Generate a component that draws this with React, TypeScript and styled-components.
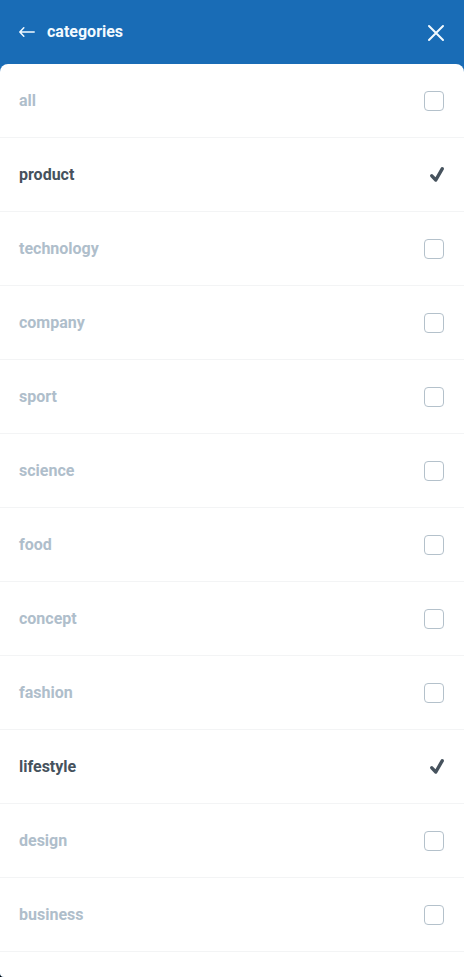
import { ReactElement, useState } from "react";
import styled, { createGlobalStyle } from 'styled-components';

const GlobalStyle = createGlobalStyle`
  * {
    box-sizing: border-box;
  }

  body {
    margin: 0;
    background: #000000;
    font-family: Roboto, "Liberation Sans", sans-serif;
    font-size: 16px;
    font-weight: 700;
  }
`;

const StyledScreen = styled.div`
  display: flex;
  flex-direction: column;
  min-height: 100vh;
  background: #196cb6;
  border-bottom-left-radius: 4px;
  overflow: hidden;
`;

const StyledHeader = styled.header`
  display: flex;
  align-items: center;
  gap: 12px;
  height: 64px;
  padding: 0 19px;
  color: #f2faff;
`;

const StyledTitle = styled.h1`
  flex: 1;
  margin: 0;
  font-size: 16px;
  line-height: 20px;
`;

const StyledIconButton = styled.button`
  display: flex;
  padding: 0;
  border: 0;
  background: none;
  color: inherit;
  cursor: pointer;
`;

const StyledPanel = styled.main`
  flex: 1;
  background: #ffffff;
  border-radius: 8px 8px 0 0;
`;

const StyledList = styled.ul`
  margin: 0;
  padding: 0;
  list-style: none;
`;

const StyledItem = styled.li`
  border-bottom: 1px solid #f3f4f5;
`;

const StyledLabel = styled.label<{ $checked: boolean }>`
  display: flex;
  align-items: center;
  justify-content: space-between;
  height: 73px;
  padding: 0 20px 0 19px;
  line-height: 20px;
  color: ${({ $checked }) => ($checked ? "#46525d" : "#afbecb")};
  cursor: pointer;
`;

const StyledCheck = styled.span`
  position: relative;
  display: flex;

  svg {
    position: absolute;
    right: 0;
    top: 2px;
    pointer-events: none;
  }
`;

const StyledCheckbox = styled.input`
  appearance: none;
  width: 20px;
  height: 20px;
  margin: 0;
  border: 1px solid #b4c1cb;
  border-radius: 4px;
  background: #ffffff;
  cursor: pointer;

  &:checked {
    border-color: transparent;
  }
`;

const categories = [
  "all",
  "product",
  "technology",
  "company",
  "sport",
  "science",
  "food",
  "concept",
  "fashion",
  "lifestyle",
  "design",
  "business",
];

function BackIcon() : ReactElement {
    return (
        <svg width="16" height="12" viewBox="0 0 16 12" fill="none" stroke="currentColor" strokeWidth="1.5" strokeLinecap="round" strokeLinejoin="round">
            <path d="M4.8 1.8 L0.8 6 L4.8 10.2 M0.8 6 H15.2"/>
        </svg>
    );
}

function CloseIcon() : ReactElement {
    return (
        <svg width="18" height="20" viewBox="0 0 18 20" fill="none" stroke="currentColor" strokeWidth="2" strokeLinecap="round">
            <path d="M2 4 L16 18 M16 4 L2 18"/>
        </svg>
    );
}

function CheckIcon() : ReactElement {
    return (
        <svg width="14" height="16" viewBox="0 0 14 16" fill="none" stroke="currentColor" strokeWidth="3.4" strokeLinecap="round" strokeLinejoin="round">
            <path d="M1.8 8.8 L5.8 13 L12.2 1.8"/>
        </svg>
    );
}

export default function App() : ReactElement {
    const [selected, setSelected] = useState<string[]>(["product", "lifestyle"]);

    const toggle = (name: string) => {
        setSelected(selected.includes(name)
            ? selected.filter((item) => item !== name)
            : [...selected, name]);
    };

    return (
        <>
            <GlobalStyle/>
            <StyledScreen>
                <StyledHeader>
                    <StyledIconButton type="button" aria-label="Back">
                        <BackIcon/>
                    </StyledIconButton>
                    <StyledTitle>categories</StyledTitle>
                    <StyledIconButton type="button" aria-label="Close">
                        <CloseIcon/>
                    </StyledIconButton>
                </StyledHeader>
                <StyledPanel>
                    <StyledList>
                        {categories.map((name) => {
                            const checked = selected.includes(name);
                            return (
                                <StyledItem key={name}>
                                    <StyledLabel $checked={checked}>
                                        {name}
                                        <StyledCheck>
                                            <StyledCheckbox
                                                type="checkbox"
                                                checked={checked}
                                                onChange={() => toggle(name)}
                                            />
                                            {checked && <CheckIcon/>}
                                        </StyledCheck>
                                    </StyledLabel>
                                </StyledItem>
                            );
                        })}
                    </StyledList>
                </StyledPanel>
            </StyledScreen>
        </>
    );
}
